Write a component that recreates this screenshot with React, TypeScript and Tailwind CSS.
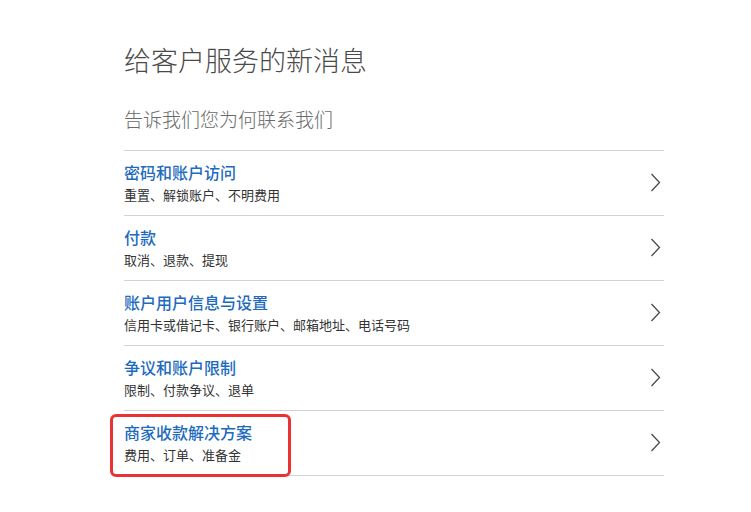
const rows = [
  { title: "密码和账户访问", desc: "重置、解锁账户、不明费用" },
  { title: "付款", desc: "取消、退款、提现" },
  { title: "账户用户信息与设置", desc: "信用卡或借记卡、银行账户、邮箱地址、电话号码" },
  { title: "争议和账户限制", desc: "限制、付款争议、退单" },
  { title: "商家收款解决方案", desc: "费用、订单、准备金", highlight: true },
];

function Chevron() {
  return (
    <svg width="11" height="19" viewBox="0 0 11 19" fill="none" className="mr-[3px] -mt-[1px]">
      <polyline points="1.5,1 9.5,9.5 1.5,18" stroke="#4a4a4a" strokeWidth="1.3" />
    </svg>
  );
}

export default function App() {
  return (
    <div
      className="min-h-screen bg-white"
      style={{ fontFamily: '"Noto Sans CJK SC", "Noto Sans", sans-serif' }}
    >
      <div className="ml-[124px] w-[540px] pt-[42px]">
        {/* Header */}
        <h1 className="text-[27px] leading-[36px] font-light text-[#4a4a4a]">给客户服务的新消息</h1>
        <p className="mt-[27px] text-[19px] leading-[28px] font-light text-[#6b6b6b]">
          告诉我们您为何联系我们
        </p>

        {/* Topics */}
        <div className="mt-[17px] border-t border-[#cdd3d6]">
          {rows.map((row) => (
            <div
              key={row.title}
              className="relative flex h-[65px] items-center justify-between border-b border-[#cdd3d6]"
            >
              <div>
                <p className="text-[16px] leading-[20px] font-medium text-[#1d6bbd]">{row.title}</p>
                <p className="mt-[3px] text-[13px] leading-[20px] text-[#333]">{row.desc}</p>
              </div>
              <Chevron />
              {row.highlight && (
                <div className="absolute left-[-14px] top-[3px] h-[63px] w-[181px] rounded-[6px] border-[3px] border-[#ea3233]" />
              )}
            </div>
          ))}
        </div>
      </div>
    </div>
  );
}
